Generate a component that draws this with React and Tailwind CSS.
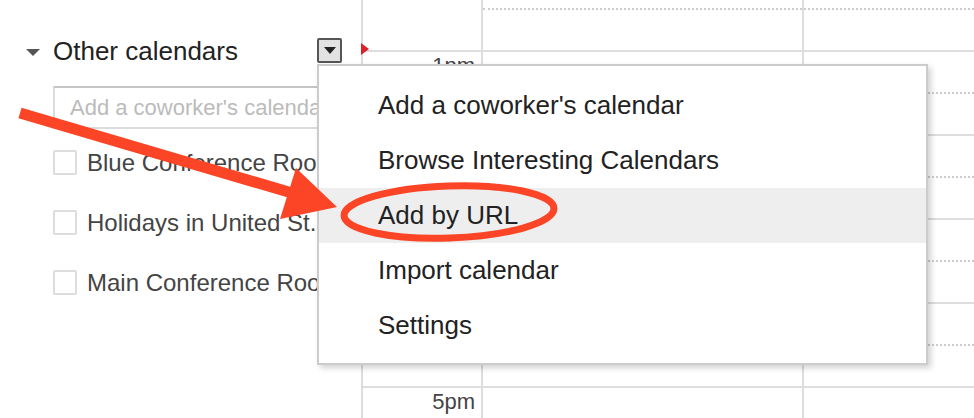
import React from "react";

const calendars = [
  "Blue Conference Room",
  "Holidays in United St.",
  "Main Conference Room",
];

const menuItems = [
  "Add a coworker's calendar",
  "Browse Interesting Calendars",
  "Add by URL",
  "Import calendar",
  "Settings",
];

// 2pm-4pm sit under the open menu, so only the visible labels are drawn
const hours = ["1pm", "", "", "", "5pm"];

// half-hour grid rows: dotted on the half, solid on the hour
const gridRows = [
  "dotted",
  "solid",
  "dotted",
  "solid",
  "dotted",
  "solid",
  "dotted",
  "solid",
  "dotted",
  "solid",
];

const DayColumn = ({ className }) => (
  <div className={`border-l-2 border-[#ddd] flex flex-col ${className}`}>
    <div className="h-[8px] shrink-0" />
    {gridRows.map((kind, i) => (
      <div
        key={i}
        className={
          kind === "solid"
            ? "h-[42px] shrink-0 border-t-2 border-solid border-[#ddd]"
            : "h-[42px] shrink-0 border-t-2 border-dotted border-[#ccc]"
        }
      />
    ))}
  </div>
);

const App = () => {
  return (
    <div className="relative flex w-[974px] h-[418px] overflow-hidden bg-white font-['Liberation_Sans',Arial,sans-serif]">
      {/* Sidebar */}
      <div className="w-[361px] shrink-0 pt-[38px]">
        <div className="flex items-center h-[25px]">
          <div className="ml-[26px] mt-[3px] w-0 h-0 border-l-[7px] border-r-[7px] border-t-[7px] border-l-transparent border-r-transparent border-t-[#555]" />
          <span className="ml-[13px] text-[26px] leading-none text-[#222]">
            Other calendars
          </span>
          <button className="ml-auto mr-[19px] w-[25px] h-[25px] rounded-[2px] border-2 border-[#555] bg-[#e2e2e2] flex items-center justify-center">
            <span className="block w-0 h-0 border-l-[6px] border-r-[6px] border-t-[7px] border-l-transparent border-r-transparent border-t-[#222]" />
          </button>
        </div>

        <input
          className="mt-[23px] ml-[53px] w-[300px] h-[43px] border-2 border-[#dcdcdc] border-t-[#c4c4c4] pl-[15px] text-[22px] outline-none placeholder:text-[#bbb]"
          placeholder="Add a coworker's calendar"
        />

        <div className="mt-[21px] ml-[53px] flex flex-col gap-[35px]">
          {calendars.map((name) => (
            <div key={name} className="flex items-center h-[25px] gap-[10px]">
              <div className="w-[24px] h-[25px] shrink-0 rounded-[2px] border-2 border-[#ddd] bg-white" />
              <span className="text-[24px] leading-none text-[#444] whitespace-nowrap">
                {name}
              </span>
            </div>
          ))}
        </div>
      </div>

      {/* Time column */}
      <div className="relative w-[120px] shrink-0 border-l-2 border-[#ddd] flex flex-col">
        <div className="h-[50px] shrink-0" />
        {hours.map((h, i) => (
          <div
            key={i}
            className="h-[84px] shrink-0 border-t-2 border-[#ddd] pt-[3px] pr-[6px] text-right text-[22px] leading-none text-[#444]"
          >
            {h}
          </div>
        ))}
        <div className="absolute left-[-2px] top-[43px] w-0 h-0 border-t-[6px] border-b-[6px] border-l-[8px] border-t-transparent border-b-transparent border-l-[#d8232a]" />
      </div>

      {/* Day columns */}
      <DayColumn className="w-[321px] shrink-0" />
      <DayColumn className="flex-1" />

      {/* Dropdown menu */}
      <div className="absolute left-[317px] top-[64px] w-[611px] h-[301px] border-2 border-[#ccc] bg-white pt-[12px] shadow-[3px_3px_6px_rgba(0,0,0,0.18)]">
        {menuItems.map((item) => (
          <div
            key={item}
            className={`h-[55px] flex items-center pl-[59px] text-[26px] text-[#222] ${
              item === "Add by URL" ? "bg-[#eee]" : ""
            }`}
          >
            {item}
          </div>
        ))}
      </div>

      {/* Annotation: arrow and circle */}
      <svg
        className="absolute inset-0 pointer-events-none"
        width="974"
        height="418"
        viewBox="0 0 974 418"
      >
        <line
          x1="20"
          y1="113"
          x2="292"
          y2="193"
          stroke="#fb4526"
          strokeWidth="11"
        />
        <polygon points="296,168 337,207 280,219" fill="#fb4526" />
        <ellipse
          cx="449"
          cy="212"
          rx="105"
          ry="26"
          fill="none"
          stroke="#fb4526"
          strokeWidth="7"
          transform="rotate(-2 449 212)"
        />
      </svg>
    </div>
  );
};

export default App;
